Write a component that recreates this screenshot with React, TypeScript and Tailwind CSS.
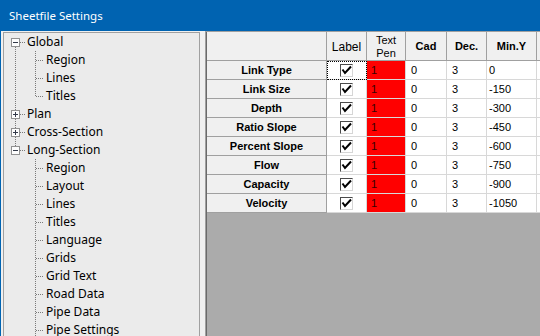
const TREE = [
  { label: "Global", level: 0, exp: "minus", first: true },
  { label: "Region", level: 1, trunk: true },
  { label: "Lines", level: 1, trunk: true },
  { label: "Titles", level: 1, trunk: true, last: true },
  { label: "Plan", level: 0, exp: "plus" },
  { label: "Cross-Section", level: 0, exp: "plus" },
  { label: "Long-Section", level: 0, exp: "minus", lastTop: true },
  { label: "Region", level: 1 },
  { label: "Layout", level: 1 },
  { label: "Lines", level: 1 },
  { label: "Titles", level: 1 },
  { label: "Language", level: 1 },
  { label: "Grids", level: 1 },
  { label: "Grid Text", level: 1 },
  { label: "Road Data", level: 1 },
  { label: "Pipe Data", level: 1 },
  { label: "Pipe Settings", level: 1 },
];

const ROWS = [
  { name: "Link Type", minY: "0" },
  { name: "Link Size", minY: "-150" },
  { name: "Depth", minY: "-300" },
  { name: "Ratio Slope", minY: "-450" },
  { name: "Percent Slope", minY: "-600" },
  { name: "Flow", minY: "-750" },
  { name: "Capacity", minY: "-900" },
  { name: "Velocity", minY: "-1050" },
];

const DOT = { stroke: "#7a7a7a", strokeWidth: 1, strokeDasharray: "1 1" };

function TreeRow({ item }: { item: (typeof TREE)[number] }) {
  if (item.level === 0) {
    return (
      <div className="flex items-center h-[18px]">
        <svg width="23" height="18" className="shrink-0">
          {!item.first && <line x1="11.5" y1="0" x2="11.5" y2="5" {...DOT} />}
          {!item.lastTop && <line x1="11.5" y1="14" x2="11.5" y2="18" {...DOT} />}
          <rect x="7.5" y="5.5" width="8" height="8" fill="#fdfdfd" stroke="#919191" />
          <line x1="9" y1="9.5" x2="14" y2="9.5" stroke="#333a4a" />
          {item.exp === "plus" && <line x1="11.5" y1="7" x2="11.5" y2="12" stroke="#333a4a" />}
          <line x1="16" y1="9.5" x2="22" y2="9.5" {...DOT} />
        </svg>
        <span>{item.label}</span>
      </div>
    );
  }
  return (
    <div className="flex items-center h-[18px]">
      <svg width="42" height="18" className="shrink-0">
        {item.trunk && <line x1="11.5" y1="0" x2="11.5" y2="18" {...DOT} />}
        <line x1="31.5" y1="0" x2="31.5" y2={item.last ? 10 : 18} {...DOT} />
        <line x1="32" y1="9.5" x2="40" y2="9.5" {...DOT} />
      </svg>
      <span>{item.label}</span>
    </div>
  );
}

function Check() {
  return (
    <div className="w-[13px] h-[13px] bg-white border-t border-l border-[#4a4a4a] border-r border-b border-r-[#d6d6d6] border-b-[#d6d6d6] flex items-center justify-center">
      <svg width="11" height="11" viewBox="0 0 11 11">
        <polyline points="1.5,4.5 4,8 10,1.5" fill="none" stroke="#000" strokeWidth="2" />
      </svg>
    </div>
  );
}

export default function App() {
  const hdr = "bg-[#f0f0f0] border-r border-b border-[#a0a0a0] flex items-center justify-center text-center pt-[1px]";
  const cell = "bg-white border-r border-b border-[#d8d8d8] flex items-center pt-[1px]";

  return (
    <div className="w-[540px] h-[336px] flex flex-col overflow-hidden bg-[#0063b1]">
      <div className="h-[31px] shrink-0 flex items-center pl-[9px] text-white text-[11.5px] font-['Noto_Sans',sans-serif]">
        Sheetfile Settings
      </div>

      <div className="flex-1 flex ml-[1px] bg-[#f0f0f0] min-h-0">
        <div className="w-[197px] ml-[2px] mt-[1px] shrink-0 bg-[#ebebeb] border-t border-l border-r border-[#a0a0a0] text-[12px] text-black font-['Noto_Sans',sans-serif] overflow-hidden">
          {TREE.map((t, i) => (
            <TreeRow key={i} item={t} />
          ))}
        </div>

        <div className="ml-[5px] flex-1 border-l border-t border-[#a0a0a0] min-w-0">
          <div className="h-full border-l border-[#6a6a6a] bg-[#ababab] font-['Liberation_Sans',Arial,sans-serif] text-[11px] text-black">
            <div className="grid grid-cols-[120px_40px_39px_41px_40px_50px_1fr] grid-rows-[29px_repeat(8,19px)]">
              <div className={hdr}></div>
              <div className={hdr + " text-[12px]"}>Label</div>
              <div className={hdr + " leading-[13px]"}>
                Text
                <br />
                Pen
              </div>
              <div className={hdr + " font-bold"}>Cad</div>
              <div className={hdr + " font-bold"}>Dec.</div>
              <div className={hdr + " font-bold"}>Min.Y</div>
              <div className="bg-[#f0f0f0] border-b border-[#a0a0a0]"></div>

              {ROWS.map((r, i) => (
                <div key={r.name} className="contents">
                  <div className="bg-[#f0f0f0] border-r border-b border-[#a0a0a0] flex items-center justify-center font-bold pt-[1px]">
                    {r.name}
                  </div>
                  <div className={"bg-white border-r border-b border-[#d8d8d8] flex items-center justify-center" + (i === 0 ? " outline-1 outline-dotted outline-black -outline-offset-1" : "")}>
                    <Check />
                  </div>
                  <div className="bg-[#ff0000] border-r border-b border-[#d8d8d8] flex items-center pl-[4px] pt-[1px] text-[#3a0000]">1</div>
                  <div className={cell + " pl-[5px]"}>0</div>
                  <div className={cell + " pl-[5px]"}>3</div>
                  <div className={cell + " pl-[2px]"}>{r.minY}</div>
                  <div className="bg-white border-b border-[#d8d8d8]"></div>
                </div>
              ))}
            </div>
          </div>
        </div>
      </div>
    </div>
  );
}
